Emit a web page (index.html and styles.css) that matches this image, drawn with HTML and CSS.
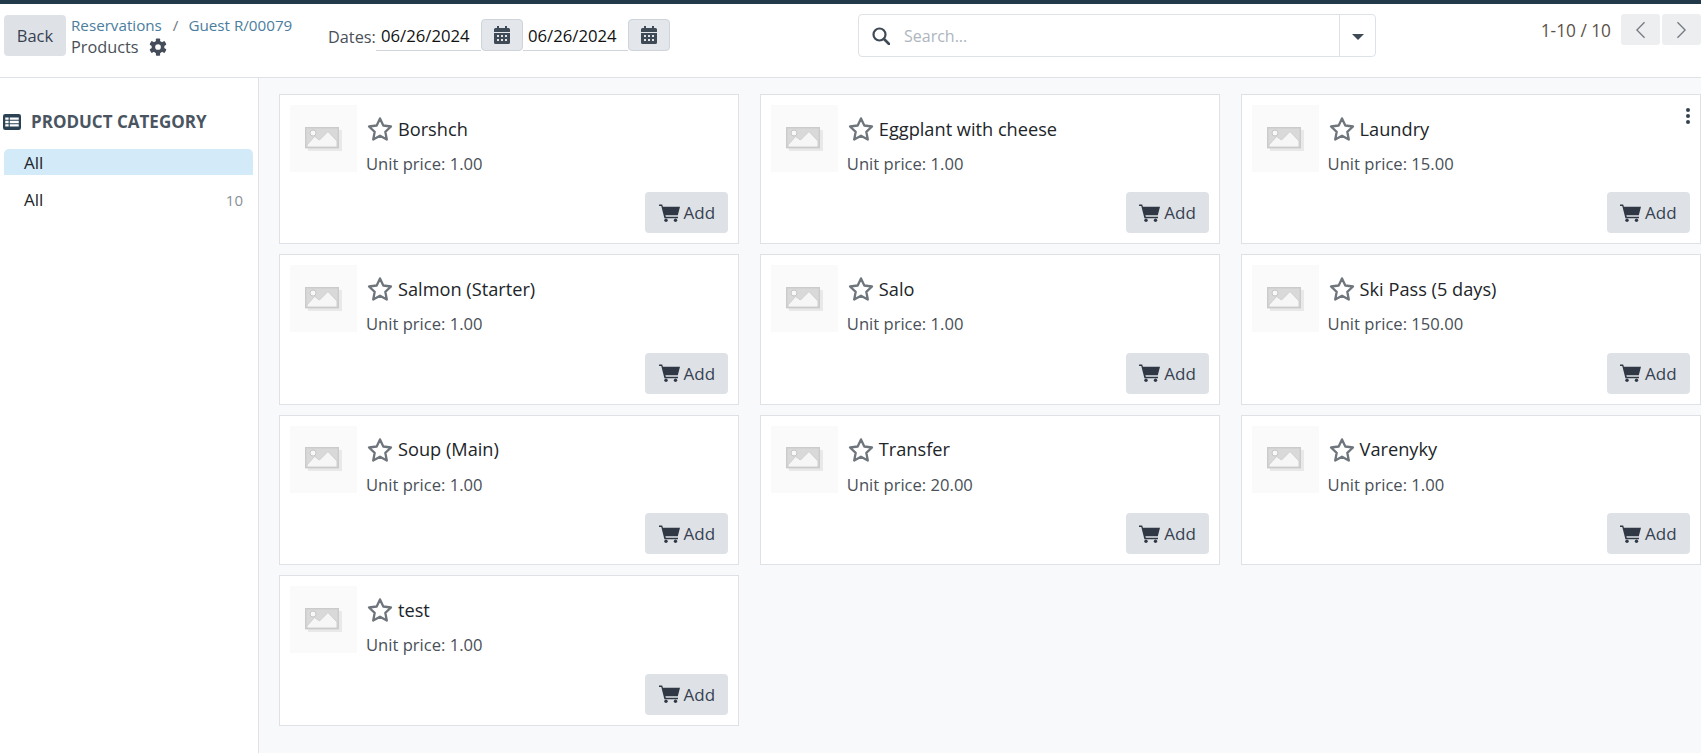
FILE: index.html
```html
<!DOCTYPE html>
<html lang="en">
<head>
<meta charset="utf-8">
<title>Products</title>
<link rel="stylesheet" href="styles.css">
</head>
<body>
<svg class="defs" width="0" height="0" aria-hidden="true">
  <symbol id="cart" viewBox="0 0 21 18"><path d="M0 .6h3.200l.7 2.200H21l-2.200 8.400H6.400l.4 1.500H19v1.500H5.400L2.300 2.100H0z" fill="currentColor"/><circle cx="7" cy="16.300" r="1.700" fill="currentColor"/><circle cx="16.500" cy="16.300" r="1.700" fill="currentColor"/></symbol>
  <symbol id="star" viewBox="0 0 28 28"><path d="M14 3.400l3.300 7.100 7.700 1-5.700 5.300 1.500 7.700L14 20.700l-6.800 3.800 1.500-7.700L3 11.500l7.700-1z" fill="none" stroke="currentColor" stroke-width="2.300" stroke-linejoin="round"/></symbol>
  <symbol id="cal" viewBox="0 0 16 18"><path d="M3 0h2v2h6V0h2v2h1.500A1.500 1.500 0 0 1 16 3.500V6H0V3.500A1.500 1.500 0 0 1 1.500 2H3zM0 7h16v9.500a1.500 1.500 0 0 1-1.500 1.500h-13A1.500 1.500 0 0 1 0 16.500z" fill="currentColor"/><path d="M3 9h2v2H3zM7 9h2v2H7zM11 9h2v2h-2zM3 13h2v2H3zM7 13h2v2H7zM11 13h2v2h-2z" fill="#e2e4e8"/></symbol>
  <symbol id="ph" viewBox="0 0 37 24"><path d="M3 3h34v21H3z" fill="#e9e9e9"/><rect x="0.700" y="0.700" width="32.600" height="20" fill="#d9d9d9" stroke="#cbcbcb" stroke-width="1.400"/><path d="M2 18v2h30v-6L23 4.500 14.500 13 9.500 9.500z" fill="#f6f6f6" stroke="#c9c9c9" stroke-width=".8"/><circle cx="8" cy="6" r="3" fill="#f8f8f8" stroke="#c6c6c6"/></symbol>
</svg>
<div class="topline"></div>
<header class="control">
  <button class="btn back">Back</button>
  <div class="crumbs">
    <div class="path"><a>Reservations</a><span class="sep">/</span><a>Guest R/00079</a></div>
    <div class="title">Products
      <svg class="gear" viewBox="0 0 24 24"><g fill="currentColor"><circle cx="12" cy="12" r="8.500"/><rect x="9.200" y="0.500" width="5.600" height="23" rx="1"/><rect x="9.200" y="0.500" width="5.600" height="23" rx="1" transform="rotate(60 12 12)"/><rect x="9.200" y="0.500" width="5.600" height="23" rx="1" transform="rotate(120 12 12)"/></g><circle cx="12" cy="12" r="3.800" fill="#fff"/></svg>
    </div>
  </div>
  <div class="dates">
    <span class="dlabel">Dates:</span>
    <span class="dinput">06/26/2024</span>
    <button class="calbtn"><svg class="calicon"><use href="#cal"/></svg></button>
    <span class="dinput">06/26/2024</span>
    <button class="calbtn"><svg class="calicon"><use href="#cal"/></svg></button>
  </div>
  <div class="search">
    <svg class="mag" viewBox="0 0 18 18"><circle cx="7.500" cy="7.500" r="6" fill="none" stroke="currentColor" stroke-width="2.200"/><path d="M12 12l5 5" stroke="currentColor" stroke-width="2.600" stroke-linecap="round"/></svg>
    <span class="ph">Search...</span>
    <span class="drop"><i class="caret"></i></span>
  </div>
  <div class="pager">
    <span class="count">1-10 / 10</span>
    <button class="pg"><svg viewBox="0 0 12 20"><path d="M10.500 1.500L2 10l8.500 8.500" fill="none" stroke="currentColor" stroke-width="1.500"/></svg></button>
    <button class="pg"><svg viewBox="0 0 12 20"><path d="M1.500 1.500L10 10l-8.500 8.500" fill="none" stroke="currentColor" stroke-width="1.500"/></svg></button>
  </div>
</header>
<div class="main">
  <aside class="side">
    <h5 class="sidehead"><svg class="tbl" viewBox="0 0 16 14" preserveAspectRatio="none"><rect x="0" y="0" width="16" height="14" rx="2" fill="currentColor"/><path d="M2 3h3v2H2zM6 3h8v2H6zM2 6h3v2H2zM6 6h8v2H6zM2 9h3v2H2zM6 9h8v2H6z" fill="#fff"/></svg>PRODUCT CATEGORY</h5>
    <div class="cat active">All</div>
    <div class="cat">All<span class="num">10</span></div>
  </aside>
  <section class="grid">
    <article class="card"><div class="thumb"><svg class="phicon"><use href="#ph"/></svg></div><div class="body"><div class="name"><svg class="star"><use href="#star"/></svg>Borshch</div><div class="price">Unit price: 1.00</div></div><button class="btn add"><svg class="cart"><use href="#cart"/></svg>Add</button></article>
    <article class="card"><div class="thumb"><svg class="phicon"><use href="#ph"/></svg></div><div class="body"><div class="name"><svg class="star"><use href="#star"/></svg>Eggplant with cheese</div><div class="price">Unit price: 1.00</div></div><button class="btn add"><svg class="cart"><use href="#cart"/></svg>Add</button></article>
    <article class="card"><div class="thumb"><svg class="phicon"><use href="#ph"/></svg></div><div class="body"><div class="name"><svg class="star"><use href="#star"/></svg>Laundry</div><div class="price">Unit price: 15.00</div></div><span class="dots"><i></i><i></i><i></i></span><button class="btn add"><svg class="cart"><use href="#cart"/></svg>Add</button></article>
    <article class="card"><div class="thumb"><svg class="phicon"><use href="#ph"/></svg></div><div class="body"><div class="name"><svg class="star"><use href="#star"/></svg>Salmon (Starter)</div><div class="price">Unit price: 1.00</div></div><button class="btn add"><svg class="cart"><use href="#cart"/></svg>Add</button></article>
    <article class="card"><div class="thumb"><svg class="phicon"><use href="#ph"/></svg></div><div class="body"><div class="name"><svg class="star"><use href="#star"/></svg>Salo</div><div class="price">Unit price: 1.00</div></div><button class="btn add"><svg class="cart"><use href="#cart"/></svg>Add</button></article>
    <article class="card"><div class="thumb"><svg class="phicon"><use href="#ph"/></svg></div><div class="body"><div class="name"><svg class="star"><use href="#star"/></svg>Ski Pass (5 days)</div><div class="price">Unit price: 150.00</div></div><button class="btn add"><svg class="cart"><use href="#cart"/></svg>Add</button></article>
    <article class="card"><div class="thumb"><svg class="phicon"><use href="#ph"/></svg></div><div class="body"><div class="name"><svg class="star"><use href="#star"/></svg>Soup (Main)</div><div class="price">Unit price: 1.00</div></div><button class="btn add"><svg class="cart"><use href="#cart"/></svg>Add</button></article>
    <article class="card"><div class="thumb"><svg class="phicon"><use href="#ph"/></svg></div><div class="body"><div class="name"><svg class="star"><use href="#star"/></svg>Transfer</div><div class="price">Unit price: 20.00</div></div><button class="btn add"><svg class="cart"><use href="#cart"/></svg>Add</button></article>
    <article class="card"><div class="thumb"><svg class="phicon"><use href="#ph"/></svg></div><div class="body"><div class="name"><svg class="star"><use href="#star"/></svg>Varenyky</div><div class="price">Unit price: 1.00</div></div><button class="btn add"><svg class="cart"><use href="#cart"/></svg>Add</button></article>
    <article class="card"><div class="thumb"><svg class="phicon"><use href="#ph"/></svg></div><div class="body"><div class="name"><svg class="star"><use href="#star"/></svg>test</div><div class="price">Unit price: 1.00</div></div><button class="btn add"><svg class="cart"><use href="#cart"/></svg>Add</button></article>
  </section>
</div>
</body>
</html>
```
FILE: styles.css
```css
* { box-sizing: border-box; }
html, body { height: 100%; }
body { margin: 0; height: 753px; overflow: hidden; display: flex; flex-direction: column; font-family: "Open Sans", "Noto Sans", sans-serif; font-size: 16px; color: #495057; background: #fff; }
.defs { position: absolute; }
button { font: inherit; border: 0; padding: 0; }
.topline { height: 4px; background: #22394a; flex: none; }
.control { height: 74px; flex: none; display: flex; align-items: flex-start; border-bottom: 1px solid #dee2e6; }
.btn { background: #dee2e6; color: #374151; border-radius: 4px; }
.back { width: 62px; height: 41px; margin: 11px 0 0 4px; font-size: 16.500px; }
.crumbs { margin: 11px 0 0 5px; width: 257px; }
.path { font-size: 15.200px; line-height: 20px; color: #4a7d9e; white-space: nowrap; }
.sep { margin: 0 10px 0 11px; color: #6c757d; }
.title { font-size: 16.300px; line-height: 24px; display: flex; align-items: center; gap: 10px; }
.gear { width: 18px; height: 18px; color: #444d59; }
.dates { display: flex; align-items: center; margin-top: 15px; width: 530px; }
.dlabel { width: 48px; white-space: nowrap; font-size: 16.300px; padding-top: 3px; }
.dinput { width: 105px; height: 32px; line-height: 33px; border-bottom: 1px solid #ced4da; color: #111; padding-left: 5px; font-size: 16.700px; white-space: nowrap; }
.calbtn { width: 42px; height: 32px; background: #e3e6ea; border: 1px solid #ced4da; border-radius: 4px; display: flex; align-items: center; justify-content: center; color: #3f4a57; }
.calicon { width: 16px; height: 18px; }
.search { width: 518px; height: 43px; margin-top: 10px; border: 1px solid #dee2e6; border-radius: 4px; display: flex; align-items: center; padding-left: 13px; color: #3f4a57; }
.mag { width: 18px; height: 18px; flex: none; }
.ph { flex: 1; margin-left: 14px; padding-top: 1px; color: #adb5bd; }
.drop { width: 36px; height: 100%; border-left: 1px solid #dee2e6; display: flex; align-items: center; justify-content: center; }
.caret { width: 0; height: 0; border-left: 6px solid transparent; border-right: 6px solid transparent; border-top: 6px solid #3f4a57; margin-top: 3px; }
.pager { margin-left: auto; margin-top: 10px; display: flex; align-items: center; gap: 2px; }
.count { margin-right: 8px; padding-top: 2px; font-size: 17.300px; color: #5c5248; white-space: nowrap; }
.pg { width: 39px; height: 31px; background: #eceef0; border-radius: 3px; color: #777c82; display: flex; align-items: center; justify-content: center; }
.pg svg { width: 11px; height: 18px; }
.main { flex: 1; display: flex; min-height: 0; }
.side { width: 259px; flex: none; border-right: 1px solid #dee2e6; padding: 32px 5px 0 4px; }
.sidehead { margin: 0 0 15px -1px; display: flex; align-items: center; gap: 10px; font-size: 17px; line-height: 24px; font-weight: 700; color: #4a5561; white-space: nowrap; }
.tbl { width: 18px; height: 16px; color: #2b4254; flex: none; }
.cat { height: 26px; line-height: 28px; padding: 0 10px 0 20px; color: #212529; display: flex; justify-content: space-between; margin-bottom: 11px; font-size: 17px; }
.cat.active { background: #d3eaf8; border-radius: 5px 5px 0 0; }
.num { font-size: 15px; color: #8a9097; }
.grid { flex: 1; background: #f8f9fa; padding: 16px 0 0 20px; display: grid; grid-template-columns: repeat(3, 460.300px); column-gap: 20.500px; row-gap: 10px; grid-auto-rows: 150.400px; align-content: start; }
.card { position: relative; background: #fff; border: 1px solid #dee2e6; padding: 10px; display: flex; }
.thumb { width: 67px; height: 67px; background: #fafafa; display: flex; align-items: center; justify-content: center; flex: none; }
.phicon { width: 37px; height: 24px; }
.body { margin-left: 9px; }
.name { display: flex; align-items: center; font-size: 18.200px; line-height: 27px; color: #212529; margin-top: 10px; gap: 4px; white-space: nowrap; }
.star { width: 28px; height: 28px; color: #6f757c; flex: none; }
.price { font-size: 16.600px; line-height: 24px; margin-top: 9px; white-space: nowrap; }
.add { position: absolute; right: 10px; bottom: 10px; width: 83px; height: 41px; display: flex; align-items: center; justify-content: center; gap: 4px; font-size: 17px; }
.cart { width: 21px; height: 18px; color: #2f3844; flex: none; }
.dots { position: absolute; top: 13px; right: 10px; display: flex; flex-direction: column; gap: 2px; }
.dots i { width: 4px; height: 4px; border-radius: 50%; background: #374151; }
```
